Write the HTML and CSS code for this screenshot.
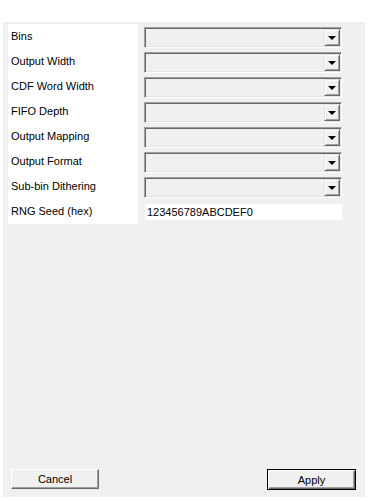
FILE: index.html
```html
<!DOCTYPE html>
<html lang="en">
<head>
  <meta charset="UTF-8">
  <meta name="viewport" content="width=device-width, initial-scale=1.0">
  <title>Generator Settings</title>
  <link rel="stylesheet" href="styles.css">
</head>
<body>
  <div class="dialog">
    <div class="form">
      <div class="labels">
        <div class="label">Bins</div>
        <div class="label">Output Width</div>
        <div class="label">CDF Word Width</div>
        <div class="label">FIFO Depth</div>
        <div class="label">Output Mapping</div>
        <div class="label">Output Format</div>
        <div class="label">Sub-bin Dithering</div>
        <div class="label">RNG Seed (hex)</div>
      </div>
      <div class="fields">
        <div class="field"><div class="combo"><span class="combo-btn"><span class="arrow"></span></span></div></div>
        <div class="field"><div class="combo"><span class="combo-btn"><span class="arrow"></span></span></div></div>
        <div class="field"><div class="combo"><span class="combo-btn"><span class="arrow"></span></span></div></div>
        <div class="field"><div class="combo"><span class="combo-btn"><span class="arrow"></span></span></div></div>
        <div class="field"><div class="combo"><span class="combo-btn"><span class="arrow"></span></span></div></div>
        <div class="field"><div class="combo"><span class="combo-btn"><span class="arrow"></span></span></div></div>
        <div class="field"><div class="combo"><span class="combo-btn"><span class="arrow"></span></span></div></div>
        <div class="field"><div class="text-input">123456789ABCDEF0</div></div>
      </div>
    </div>

    <div class="actions">
      <button class="btn">Cancel</button>
      <button class="btn default">Apply</button>
    </div>
  </div>
</body>
</html>
```

FILE: styles.css
```css
body {
  font-family: "Liberation Sans", Arial, sans-serif;
  font-size: 11px;
  color: #000;
  background-color: #fff;
  margin: 0;
}

.dialog {
  margin: 22px 0 0 3px;
  width: 362px;
  height: 475px;
  background-color: #f0f0f0;
  display: flex;
  flex-direction: column;
}

.form {
  display: flex;
  padding: 2px 0 0 5px;
  flex: 1;
  align-items: flex-start;
}

.labels {
  width: 130px;
  background-color: #fff;
}

.label {
  height: 25px;
  line-height: 25px;
  padding-left: 3px;
}

.fields {
  margin-left: 6px;
  width: 198px;
}

.field {
  height: 25px;
  padding-top: 3px;
  box-sizing: border-box;
}

.combo {
  height: 21px;
  box-sizing: border-box;
  border-top: 1px solid #a0a0a0;
  border-left: 1px solid #a0a0a0;
  border-bottom: 1px solid #fff;
  border-right: 1px solid #fff;
  box-shadow: inset 1px 1px #696969, inset -1px -1px #e3e3e3;
  background-color: #f0f0f0;
  display: flex;
  justify-content: flex-end;
  padding: 1px;
}

.combo-btn {
  width: 16px;
  height: 17px;
  box-sizing: border-box;
  background-color: #f0f0f0;
  border-top: 1px solid #e3e3e3;
  border-left: 1px solid #e3e3e3;
  border-bottom: 1px solid #696969;
  border-right: 1px solid #696969;
  box-shadow: inset 1px 1px #fff, inset -1px -1px #a0a0a0;
  display: flex;
  align-items: center;
  justify-content: center;
}

.arrow {
  width: 0;
  height: 0;
  border-left: 4px solid transparent;
  border-right: 4px solid transparent;
  border-top: 4px solid #000;
}

.text-input {
  margin: 2px 0 0 1px;
  height: 16px;
  line-height: 16px;
  background-color: #fff;
  padding-left: 2px;
}

.actions {
  display: flex;
  justify-content: space-between;
  padding: 0 9px 7px 8px;
}

.btn {
  font-family: inherit;
  font-size: 11px;
  color: #000;
  width: 88px;
  height: 20px;
  padding: 0;
  background-color: #f0f0f0;
  border-top: 1px solid #fff;
  border-left: 1px solid #fff;
  border-bottom: 1px solid #696969;
  border-right: 1px solid #696969;
  box-shadow: inset -1px -1px #a0a0a0;
  cursor: pointer;
}

.btn.default {
  width: 89px;
  height: 21px;
  border: 1px solid #000;
  box-shadow: inset 1px 1px #fff, inset -1px -1px #696969, inset -2px -2px #a0a0a0;
}
```
